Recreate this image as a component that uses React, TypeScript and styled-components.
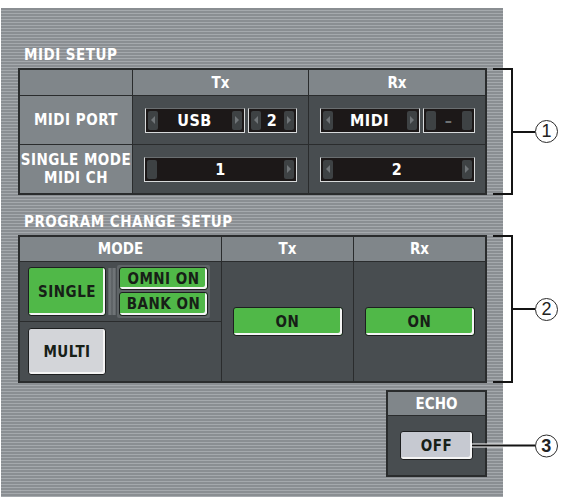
import styled, { createGlobalStyle } from 'styled-components';

const GlobalStyle = createGlobalStyle`
  body {
    margin: 0;
    background: #ffffff;
    font-family: "DejaVu Sans Condensed", "DejaVu Sans", sans-serif;
  }
`;

const Page = styled.div`
  width: 562px;
  height: 504px;
  box-sizing: border-box;
  padding: 8px 0 0 1px;
  overflow: hidden;
`;

const Panel = styled.div`
  width: 502px;
  height: 489px;
  box-sizing: border-box;
  padding: 37px 0 0 17px;
  display: flex;
  flex-direction: column;
  overflow: visible;
  background: repeating-linear-gradient(
    180deg,
    #8a8e92 0px,
    #8a8e92 2px,
    #a5a9ad 2px,
    #a5a9ad 3px
  );
`;

const SectionLabel = styled.div<{ top?: number }>`
  height: 20px;
  line-height: 20px;
  margin-top: ${(p) => p.top ?? 0}px;
  margin-bottom: 3px;
  padding-left: 6px;
  color: #ffffff;
  font-size: 15px;
  font-weight: bold;
  letter-spacing: 0.5px;
`;

const Row = styled.div`
  display: flex;
  align-items: center;
  flex-shrink: 0;
  width: max-content;
`;

const Table = styled.div<{ cols: string; rows: string }>`
  display: grid;
  grid-template-columns: ${(p) => p.cols};
  grid-template-rows: ${(p) => p.rows};
  gap: 1px;
  padding: 2px;
  width: 469px;
  box-sizing: border-box;
  background: #2a2c2d;
  flex-shrink: 0;
`;

const HeadCell = styled.div`
  background: #80868a;
  color: #ffffff;
  font-size: 15px;
  font-weight: bold;
  display: flex;
  align-items: center;
  justify-content: center;
`;

const LabelCell = styled(HeadCell)`
  text-align: center;
  line-height: 18px;
  letter-spacing: 0.5px;
`;

const DataCell = styled.div`
  background: #484d50;
  display: flex;
  align-items: center;
  justify-content: center;
  gap: 3px;
`;

const Bracket = styled.div`
  align-self: stretch;
  width: 20px;
  margin-left: 6px;
  box-sizing: border-box;
  border: 2px solid #141414;
  border-left: none;
  flex-shrink: 0;
`;

const Leader = styled.div<{ w: number }>`
  width: ${(p) => p.w}px;
  height: 2px;
  background: #141414;
  flex-shrink: 0;
`;

const Circle = styled.div`
  width: 23px;
  height: 23px;
  box-sizing: border-box;
  border: 1.3px solid #2a2a2a;
  border-radius: 50%;
  background: #ffffff;
  color: #222222;
  font-family: "Liberation Sans", Arial, sans-serif;
  font-size: 18px;
  line-height: 21px;
  text-align: center;
  flex-shrink: 0;
`;

/* spinner (value box with left/right arrows) */
const Spinner = styled.div<{ w: number }>`
  width: ${(p) => p.w}px;
  height: 25px;
  box-sizing: border-box;
  padding: 2px;
  display: flex;
  align-items: stretch;
  background: #1c1818;
  border: 1px solid #d8dadb;
  border-top-color: #6a6e70;
`;

const Pad = styled.div`
  width: 10px;
  border-radius: 2px;
  background: #3e4244;
  display: flex;
  align-items: center;
  justify-content: center;
  flex-shrink: 0;
`;

const Arrow = styled.span<{ dir: 'left' | 'right' }>`
  width: 0;
  height: 0;
  border-top: 4px solid transparent;
  border-bottom: 4px solid transparent;
  ${(p) =>
    p.dir === 'left'
      ? 'border-right: 4px solid #707578;'
      : 'border-left: 4px solid #707578;'}
`;

const Value = styled.div<{ dim?: boolean }>`
  flex: 1;
  color: ${(p) => (p.dim ? '#6d7173' : '#ffffff')};
  font-size: 16px;
  font-weight: bold;
  line-height: 19px;
  text-align: center;
  letter-spacing: 0.5px;
`;

interface SpinBoxProps {
  w: number;
  value: string;
  left?: boolean;
  right?: boolean;
  dim?: boolean;
}

const SpinBox = ({ w, value, left = true, right = true, dim }: SpinBoxProps) => (
  <Spinner w={w}>
    <Pad>{left && <Arrow dir="left" />}</Pad>
    <Value dim={dim}>{value}</Value>
    <Pad>{right && <Arrow dir="right" />}</Pad>
  </Spinner>
);

const tones = {
  green: '#50b848',
  gray: '#d3d5d9',
  off: '#c6c9d1',
};

const Button = styled.div<{ w: number; h: number; tone: keyof typeof tones }>`
  width: ${(p) => p.w}px;
  height: ${(p) => p.h}px;
  box-sizing: border-box;
  border: 1px solid #1d1f20;
  border-radius: 3px;
  background: ${(p) => tones[p.tone]};
  box-shadow: inset -2px -2px 0 #f4f4f4;
  color: #172017;
  font-size: 15px;
  font-weight: bold;
  letter-spacing: 0.5px;
  display: flex;
  align-items: center;
  justify-content: center;
  position: relative;
  flex-shrink: 0;
`;

const ModeBody = styled.div`
  display: grid;
  grid-template-rows: 1fr 1fr;
  gap: 1px;
  background: #2a2c2d;
`;

const ModeHalf = styled.div`
  background: #484d50;
  display: flex;
  align-items: center;
  padding-left: 8px;
`;

const LinkBar = styled.div`
  width: 8px;
  height: 47px;
  margin: 0 1px 0 2px;
  background: linear-gradient(
    90deg,
    #5a5f62 0px,
    #767b7e 2px,
    #585d60 4px,
    #767b7e 6px,
    #5a5f62 8px
  );
`;

const OptionGroup = styled.div`
  width: 93px;
  box-sizing: border-box;
  padding: 2px;
  border-radius: 2px;
  background: #5f6467;
  display: flex;
  flex-direction: column;
  gap: 2px;
`;

const EchoRow = styled.div`
  display: flex;
  margin-top: 7px;
  padding-left: 368px;
`;

const EchoBox = styled.div`
  width: 101px;
  height: 87px;
  box-sizing: border-box;
  padding: 2px;
  display: grid;
  grid-template-rows: 23px 1fr;
  gap: 1px;
  background: #2a2c2d;
`;

const EchoLeader = styled.div`
  position: absolute;
  left: 100%;
  top: 50%;
  transform: translateY(-50%);
  display: flex;
  align-items: center;
`;

const WhiteLine = styled(Leader)`
  box-shadow: 0 0 0 1px #ffffff;
`;

const App = () => {
  return (
    <Page>
      <GlobalStyle />
      <Panel>
        <SectionLabel>MIDI SETUP</SectionLabel>
        <Row>
          <Table cols="112px 175px 176px" rows="25px 48px 48px">
            <HeadCell />
            <HeadCell>Tx</HeadCell>
            <HeadCell>Rx</HeadCell>

            <LabelCell>MIDI PORT</LabelCell>
            <DataCell>
              <SpinBox w={100} value="USB" />
              <SpinBox w={49} value="2" />
            </DataCell>
            <DataCell>
              <SpinBox w={100} value="MIDI" />
              <SpinBox w={52} value="–" left={false} right={false} dim />
            </DataCell>

            <LabelCell>
              SINGLE MODE
              <br />
              MIDI CH
            </LabelCell>
            <DataCell>
              <SpinBox w={153} value="1" left={false} />
            </DataCell>
            <DataCell>
              <SpinBox w={155} value="2" />
            </DataCell>
          </Table>
          <Bracket />
          <Leader w={22} />
          <Circle>1</Circle>
        </Row>

        <SectionLabel top={17}>PROGRAM CHANGE SETUP</SectionLabel>
        <Row>
          <Table cols="201px 131px 131px" rows="24px 119px">
            <HeadCell>MODE</HeadCell>
            <HeadCell>Tx</HeadCell>
            <HeadCell>Rx</HeadCell>

            <ModeBody>
              <ModeHalf>
                <Button w={78} h={49} tone="green">
                  SINGLE
                </Button>
                <LinkBar />
                <OptionGroup>
                  <Button w={89} h={23} tone="green">
                    OMNI ON
                  </Button>
                  <Button w={89} h={24} tone="green">
                    BANK ON
                  </Button>
                </OptionGroup>
              </ModeHalf>
              <ModeHalf>
                <Button w={78} h={47} tone="gray">
                  MULTI
                </Button>
              </ModeHalf>
            </ModeBody>
            <DataCell>
              <Button w={110} h={29} tone="green">
                ON
              </Button>
            </DataCell>
            <DataCell>
              <Button w={110} h={29} tone="green">
                ON
              </Button>
            </DataCell>
          </Table>
          <Bracket />
          <Leader w={22} />
          <Circle>2</Circle>
        </Row>

        <EchoRow>
          <EchoBox>
            <HeadCell>ECHO</HeadCell>
            <DataCell>
              <Button w={73} h={29} tone="off">
                OFF
                <EchoLeader>
                  <WhiteLine w={63} />
                  <Circle>3</Circle>
                </EchoLeader>
              </Button>
            </DataCell>
          </EchoBox>
        </EchoRow>
      </Panel>
    </Page>
  );
};

export default App;
